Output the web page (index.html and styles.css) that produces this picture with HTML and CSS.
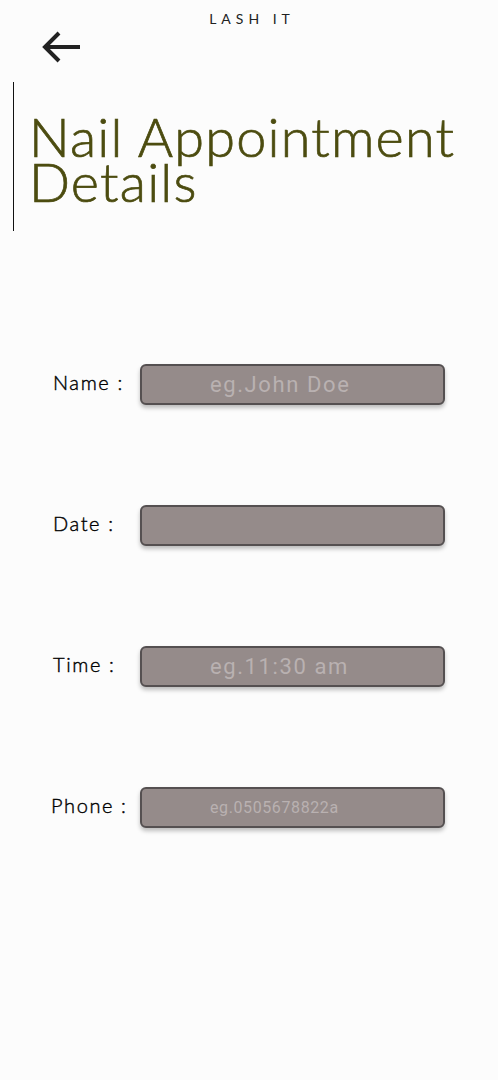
FILE: index.html
```html
<!DOCTYPE html>
<html>
<head>
<meta charset="utf-8">
<link rel="stylesheet" href="styles.css">
</head>
<body>
<div class="page">
  <header class="top">
    <div class="brand">LASH IT</div>
    <button class="back" aria-label="Back">
      <svg width="42" height="36" viewBox="0 0 42 36"><path d="M40 17H5M19 3L5 17L19 31" fill="none" stroke="#222" stroke-width="4" stroke-linecap="butt"/></svg>
    </button>
  </header>
  <div class="title-block">
    <h1 class="title">Nail Appointment Details</h1>
  </div>
  <form class="form">
    <div class="row"><label class="label">Name :</label><div class="field"><span class="ph">eg.John Doe</span></div></div>
    <div class="row"><label class="label">Date :</label><div class="field"><span class="ph"></span></div></div>
    <div class="row"><label class="label">Time :</label><div class="field"><span class="ph">eg.11:30 am</span></div></div>
    <div class="row"><label class="label label-phone">Phone :</label><div class="field"><span class="ph ph-small">eg.0505678822a</span></div></div>
  </form>
</div>
</body>
</html>
```
FILE: styles.css
```css
html, body { margin: 0; padding: 0; background: #fcfcfc; }
body { font-family: Lato, "Open Sans", sans-serif; color: #111; }
.page { width: 498px; height: 1080px; position: relative; }
.top { height: 82px; position: relative; }
.brand { text-align: center; padding-top: 11px; font-size: 14px; font-weight: 400; letter-spacing: 5px; color: #222; padding-left: 6px; line-height: 16px; }
.back { position: absolute; left: 40px; top: 30px; background: none; border: 0; padding: 0; width: 42px; height: 36px; }
.back svg { display: block; }
.title-block { margin-left: 13px; border-left: 1px solid #111; height: 149px; padding-left: 15px; padding-top: 32px; box-sizing: border-box; }
.title { margin: 0; font-weight: 300; font-size: 54px; line-height: 45px; color: #4c4c10; letter-spacing: 1.2px; -webkit-text-stroke: 0.7px #4c4c10; }
.form { padding-top: 133px; }
.row { display: flex; align-items: center; height: 41px; margin-bottom: 100px; }
.label { width: 87px; padding-left: 53px; font-size: 20px; font-weight: 300; letter-spacing: 1.6px; color: #000; -webkit-text-stroke: 0.4px #000; margin-top: -5px; }
.label-phone { padding-left: 51px; width: 89px; }
.field { width: 305px; height: 41px; box-sizing: border-box; background: #958b8a; border: 2px solid #555051; border-radius: 6px; box-shadow: 0 3px 4px rgba(0,0,0,0.25); display: flex; align-items: center; padding-left: 68px; }
.ph { font-family: Roboto, sans-serif; font-size: 22px; letter-spacing: 1.6px; color: #b9b1b1; }
.ph-small { font-size: 16px; letter-spacing: 0.6px; }
```
